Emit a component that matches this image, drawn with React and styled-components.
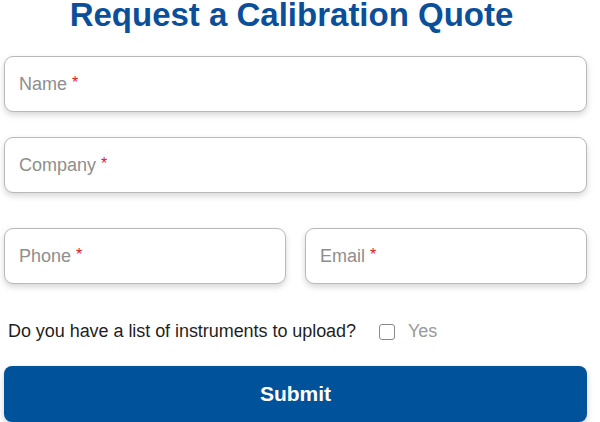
import React from 'react';
import styled, { createGlobalStyle } from 'styled-components';

const GlobalStyle = createGlobalStyle`
  html, body {
    margin: 0;
    padding: 0;
    background: #ffffff;
  }
  body {
    font-family: 'Liberation Sans', Arial, Helvetica, sans-serif;
  }
`;

const Wrapper = styled.div`
  width: 583px;
  margin: 0 13px 0 4px;
`;

const Title = styled.h2`
  margin: -3px 0 0;
  text-align: center;
  color: #0b4f9b;
  font-size: 33px;
  font-weight: 700;
  line-height: 36px;
  padding-right: 8px;
  white-space: nowrap;
`;

const Form = styled.form`
  display: flex;
  flex-direction: column;
  margin-top: 23px;
`;

const Row = styled.div`
  display: flex;
  gap: 19px;
  margin-top: ${(p) => p.$top || 0}px;
`;

const Field = styled.div`
  flex: 1;
  height: 54px;
  border: 1px solid #b9b9b9;
  border-radius: 9px;
  box-shadow: 0 3px 6px rgba(0, 0, 0, 0.16);
  display: flex;
  align-items: center;
  padding: 0 14px;
  font-size: 18px;
  color: #8e8e8e;
  background: #fff;
`;

const Required = styled.span`
  color: #e8141c;
  margin-left: 5px;
  font-size: 16px;
  align-self: flex-start;
  margin-top: 17px;
`;

const Question = styled.div`
  display: flex;
  align-items: center;
  margin-top: 37px;
  padding-left: 4px;
  font-size: 18px;
  letter-spacing: -0.05px;
  color: #1f1f1f;
`;

const Check = styled.span`
  width: 14px;
  height: 14px;
  border: 1px solid #8a8a8a;
  border-radius: 3px;
  margin-left: 23px;
  background: #fff;
`;

const CheckLabel = styled.span`
  margin-left: 13px;
  color: #9a9a9a;
  font-size: 18px;
`;

const Submit = styled.button`
  margin-top: 24px;
  height: 56px;
  border: none;
  border-radius: 8px;
  background: #00529b;
  color: #fff;
  font-family: inherit;
  font-size: 21px;
  font-weight: 700;
  box-shadow: 0 3px 6px rgba(0, 0, 0, 0.2);
`;

function Input({ label }) {
  return (
    <Field>
      {label}
      <Required>*</Required>
    </Field>
  );
}

export default function App() {
  return (
    <Wrapper>
      <GlobalStyle />
      <Title>Request a Calibration Quote</Title>
      <Form>
        <Row>
          <Input label="Name" />
        </Row>
        <Row $top={25}>
          <Input label="Company" />
        </Row>
        <Row $top={35}>
          <Input label="Phone" />
          <Input label="Email" />
        </Row>
        <Question>
          Do you have a list of instruments to upload?
          <Check />
          <CheckLabel>Yes</CheckLabel>
        </Question>
        <Submit type="button">Submit</Submit>
      </Form>
    </Wrapper>
  );
}
